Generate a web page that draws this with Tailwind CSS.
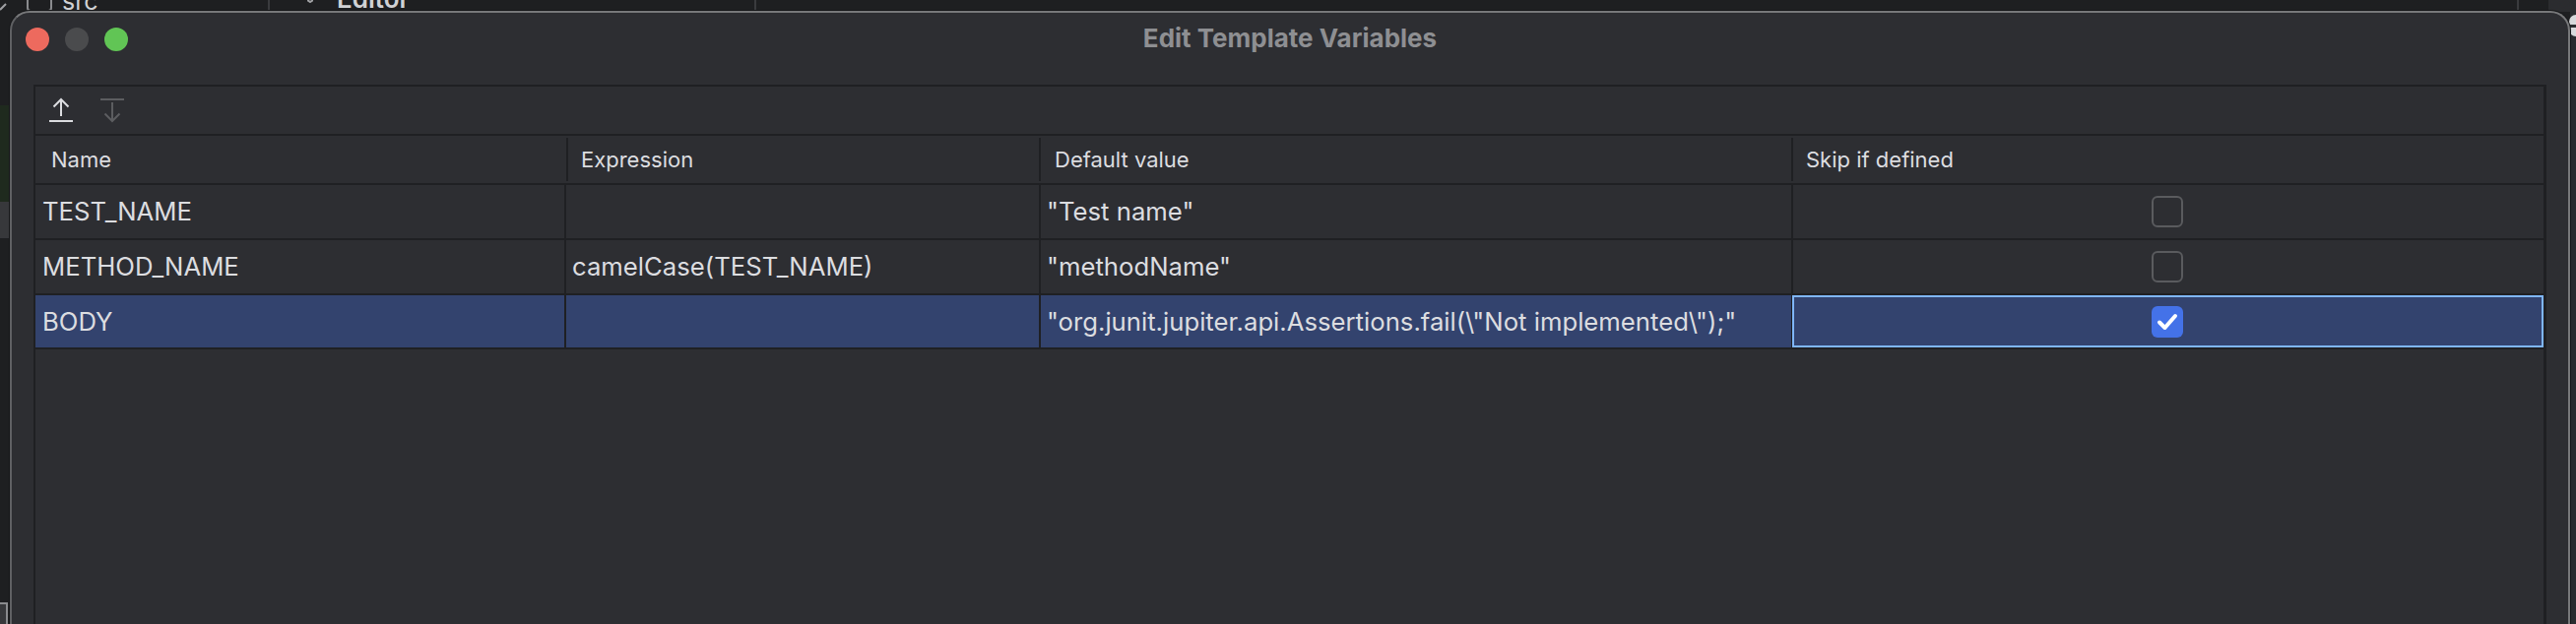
<!DOCTYPE html>
<html lang="en">
<head>
  <meta charset="UTF-8" />
  <title>Edit Template Variables</title>
  <script src="https://cdn.jsdelivr.net/npm/@tailwindcss/browser@4"></script>
</head>
<body class="relative w-[2616px] h-[634px] overflow-hidden bg-[#1e1f21] font-['Inter','Liberation_Sans',sans-serif] text-[#dcdde0]">

  <!-- IDE behind the dialog -->
  <div class="absolute inset-x-0 top-0 h-[12px] overflow-hidden flex text-[#d0d1d4]">
    <div class="relative w-[274px] shrink-0 flex items-start pl-[27px] gap-[10px] border-r-2 border-[#3a3b3e]">
      <svg class="absolute left-0 top-[3px]" width="8" height="8" viewBox="0 0 8 8" fill="none" stroke="#a0a1a4" stroke-width="2"><path d="M0 7 6 1"/></svg>
      <div class="w-[26px] h-[30px] -mt-[18px] border-2 border-[#8a8b8e] rounded-[4px]"></div>
      <span class="text-[25px] leading-none -mt-[11px]">src</span>
    </div>
    <div class="relative w-[494px] shrink-0 pl-[68px] border-r-2 border-[#3a3b3e]">
      <svg class="absolute left-[38px] top-0" width="6" height="3" viewBox="0 0 6 3" fill="none" stroke="#a0a1a4" stroke-width="2"><path d="M0 0 3 2 6 0"/></svg>
      <span class="block text-[26px] leading-none font-semibold -mt-[14px]">Editor</span>
    </div>
    <div class="w-[1790px] shrink-0 border-r-2 border-[#3a3b3e]"></div>
    <div class="flex-1 ml-[30px] bg-[#2b2c2f]"></div>
  </div>
  <div class="absolute left-0 top-[107px] w-[10px] h-[98px] bg-[#1f2a1e]"></div>
  <div class="absolute left-0 top-[205px] w-[10px] h-[37px] bg-[#37383b]"></div>
  <div class="absolute left-0 top-[612px] w-[8px] h-[22px] border-t-2 border-r-2 border-[#8a8b8e] bg-[#37383b]"></div>
  <div class="absolute left-[2610px] top-[12px] right-0 bottom-0 bg-[#2b2c2f]"></div>
  <div class="absolute left-[2609px] top-[15px] w-[14px] h-[22px] rounded-full bg-[#d8d9db] flex items-center">
    <div class="w-full h-[3px] bg-[#2b2c2f]"></div>
  </div>

  <!-- Dialog window -->
  <div class="absolute left-[10px] top-[11px] w-[2600px] h-[640px] flex flex-col bg-[#2d2e32] border-2 border-[#5f6063] border-t-[#77787a] border-r-[#77787a] rounded-t-[20px] px-[22px] shadow-[0_0_0_1px_#151618]">
    <div class="relative h-[73px] shrink-0 flex items-center justify-center pb-[22px]">
      <div class="absolute left-[-8px] top-[15px] flex gap-[16px]">
        <span class="w-[24px] h-[24px] rounded-full bg-[#ed6a5e]"></span>
        <span class="w-[24px] h-[24px] rounded-full bg-[#4a4b4d]"></span>
        <span class="w-[24px] h-[24px] rounded-full bg-[#61c555]"></span>
      </div>
      <span class="text-[26px] font-bold text-[#8e8f92]">Edit Template Variables</span>
    </div>

    <div class="flex-1 border-2 border-[#1f2023] border-r-[3px] flex flex-col">
      <!-- Move up / down -->
      <div class="h-[48px] shrink-0 flex items-center pl-[14px] gap-[28px]">
        <svg width="24" height="26" viewBox="0 0 24 26" fill="none" stroke="#dcdde0" stroke-width="2"><path d="M12 2V19M4.500 9.500 12 2l7.500 7.500"/><path d="M0 24h24"/></svg>
        <svg width="24" height="26" viewBox="0 0 24 26" fill="none" stroke="#5c5d60" stroke-width="2"><path d="M0 2h24"/><path d="M12 5V24M4.500 16.500 12 24l7.500-7.500"/></svg>
      </div>

      <!-- Header -->
      <div class="h-[52px] shrink-0 border-y-2 border-[#1f2023] grid grid-cols-[539px_480px_764px_1fr] items-center text-[22px]">
        <div class="pl-[16px] pt-[1px]">Name</div>
        <div class="h-[44px] flex items-center pl-[13px] pt-[1px] border-l-2 border-[#1f2023]">Expression</div>
        <div class="h-[44px] flex items-center pl-[14px] pt-[1px] border-l-2 border-[#1f2023]">Default value</div>
        <div class="h-[44px] flex items-center pl-[13px] pt-[1px] border-l-2 border-[#1f2023]">Skip if defined</div>
      </div>

      <!-- Rows -->
      <div class="h-[56px] shrink-0 border-b-2 border-[#1f2023] grid grid-cols-[537px_482px_764px_1fr] text-[25.7px]">
        <div class="flex items-center pl-[7px]">TEST_NAME</div>
        <div class="flex items-center pl-[6px] border-l-2 border-[#1f2023]"></div>
        <div class="flex items-center pl-[6px] border-l-2 border-[#1f2023]">"Test name"</div>
        <div class="flex items-center justify-center pr-[3px] border-l-2 border-[#1f2023]">
          <span class="w-[32px] h-[32px] rounded-[6px] border-2 border-[#5a5b5e]"></span>
        </div>
      </div>
      <div class="h-[56px] shrink-0 border-b-2 border-[#1f2023] grid grid-cols-[537px_482px_764px_1fr] text-[25.7px]">
        <div class="flex items-center pl-[7px]">METHOD_NAME</div>
        <div class="flex items-center pl-[6px] border-l-2 border-[#1f2023]">camelCase(TEST_NAME)</div>
        <div class="flex items-center pl-[6px] border-l-2 border-[#1f2023]">"methodName"</div>
        <div class="flex items-center justify-center pr-[3px] border-l-2 border-[#1f2023]">
          <span class="w-[32px] h-[32px] rounded-[6px] border-2 border-[#5a5b5e]"></span>
        </div>
      </div>
      <div class="h-[55px] shrink-0 border-b-2 border-[#1f2023] grid grid-cols-[537px_482px_764px_1fr] text-[25.7px] bg-[#33436e]">
        <div class="flex items-center pl-[7px] pt-[1px]">BODY</div>
        <div class="flex items-center pl-[6px] border-l-2 border-[#1f2023]"></div>
        <div class="flex items-center pl-[6px] pt-[1px] border-l-2 border-[#1f2023] whitespace-nowrap">"org.junit.jupiter.api.Assertions.fail(\"Not implemented\");"</div>
        <div class="flex items-center justify-center border-l border-[#1f2023]">
          <div class="w-full h-full flex items-center justify-center pr-[2px] border-2 border-[#7fb6f8]">
            <span class="w-[32px] h-[32px] rounded-[6px] bg-[#4472e8] flex items-center justify-center">
              <svg width="22" height="18" viewBox="0 0 22 18" fill="none" stroke="#fff" stroke-width="4" stroke-linecap="round" stroke-linejoin="round"><path d="M3 9.500 8.500 15 19 3"/></svg>
            </span>
          </div>
        </div>
      </div>
    </div>
  </div>
</body>
</html>
